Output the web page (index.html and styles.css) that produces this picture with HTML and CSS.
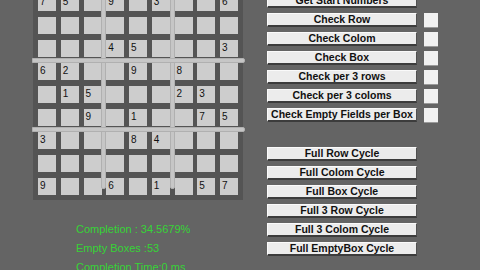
FILE: index.html
```html
<!DOCTYPE html>
<html lang="en">
<head>
    <meta charset="UTF-8">
    <title>Sudoku Solver</title>
    <link rel="stylesheet" href="styles.css">
</head>
<body>
    <div class="left-side">
        <div class="board">
            <div class="cell">7</div><div class="cell">5</div><div class="cell"></div><div class="cell">9</div><div class="cell"></div><div class="cell">3</div><div class="cell"></div><div class="cell"></div><div class="cell">6</div>
            <div class="cell"></div><div class="cell"></div><div class="cell"></div><div class="cell"></div><div class="cell"></div><div class="cell"></div><div class="cell"></div><div class="cell"></div><div class="cell"></div>
            <div class="cell"></div><div class="cell"></div><div class="cell"></div><div class="cell">4</div><div class="cell">5</div><div class="cell"></div><div class="cell"></div><div class="cell"></div><div class="cell">3</div>
            <div class="cell">6</div><div class="cell">2</div><div class="cell"></div><div class="cell"></div><div class="cell">9</div><div class="cell"></div><div class="cell">8</div><div class="cell"></div><div class="cell"></div>
            <div class="cell"></div><div class="cell">1</div><div class="cell">5</div><div class="cell"></div><div class="cell"></div><div class="cell"></div><div class="cell">2</div><div class="cell">3</div><div class="cell"></div>
            <div class="cell"></div><div class="cell"></div><div class="cell">9</div><div class="cell"></div><div class="cell">1</div><div class="cell"></div><div class="cell"></div><div class="cell">7</div><div class="cell">5</div>
            <div class="cell">3</div><div class="cell"></div><div class="cell"></div><div class="cell"></div><div class="cell">8</div><div class="cell">4</div><div class="cell"></div><div class="cell"></div><div class="cell"></div>
            <div class="cell"></div><div class="cell"></div><div class="cell"></div><div class="cell"></div><div class="cell"></div><div class="cell"></div><div class="cell"></div><div class="cell"></div><div class="cell"></div>
            <div class="cell">9</div><div class="cell"></div><div class="cell"></div><div class="cell">6</div><div class="cell"></div><div class="cell">1</div><div class="cell"></div><div class="cell">5</div><div class="cell">7</div>

            <div class="bar bar-v bar-v1"></div>
            <div class="bar bar-v bar-v2"></div>
            <div class="bar bar-h bar-h1"></div>
            <div class="bar bar-h bar-h2"></div>
        </div>

        <div class="stats">
            <p>Completion : 34.5679%</p>
            <p>Empty Boxes :53</p>
            <p>Completion Time:0 ms</p>
        </div>
    </div>

    <div class="right-side">
        <div class="btn-group">
            <div class="btn-row"><button class="btn">Get Start Numbers</button></div>
            <div class="btn-row"><button class="btn">Check Row</button><span class="check-box"></span></div>
            <div class="btn-row"><button class="btn">Check Colom</button><span class="check-box"></span></div>
            <div class="btn-row"><button class="btn">Check Box</button><span class="check-box"></span></div>
            <div class="btn-row"><button class="btn">Check per 3 rows</button><span class="check-box"></span></div>
            <div class="btn-row"><button class="btn">Check per 3 coloms</button><span class="check-box"></span></div>
            <div class="btn-row"><button class="btn">Check Empty Fields per Box</button><span class="check-box"></span></div>
        </div>

        <div class="btn-group cycles">
            <div class="btn-row"><button class="btn">Full Row Cycle</button></div>
            <div class="btn-row"><button class="btn">Full Colom Cycle</button></div>
            <div class="btn-row"><button class="btn">Full Box Cycle</button></div>
            <div class="btn-row"><button class="btn">Full 3 Row Cycle</button></div>
            <div class="btn-row"><button class="btn">Full 3 Colom Cycle</button></div>
            <div class="btn-row"><button class="btn">Full EmptyBox Cycle</button></div>
        </div>
    </div>
</body>
</html>
```

FILE: styles.css
```css
body {
    font-family: "Liberation Sans", Arial, sans-serif;
    background-color: #646464;
    margin: 0;
    padding: 0;
    width: 480px;
    height: 270px;
    overflow: hidden;
    display: flex;
}

.left-side {
    width: 234px;
    padding-left: 33px;
}

.board {
    position: relative;
    margin-top: -11px;
    width: fit-content;
    padding: 5px;
    background-color: #545454;
    display: grid;
    grid-template-columns: repeat(9, 18px);
    grid-auto-rows: 17px;
    column-gap: 4.75px;
    row-gap: 6px;
}

.cell {
    background-color: #cdcdcd;
    color: #111;
    font-size: 10px;
    line-height: 10px;
    padding: 3px 0 0 2px;
}

.bar {
    position: absolute;
    background-color: #c6c6c6;
    border: 1px solid #b0b0b0;
    box-sizing: border-box;
}

.bar-v {
    top: 0;
    width: 5px;
    height: 200px;
    border-radius: 0 0 2px 2px;
}

.bar-v1 { left: 68px; }
.bar-v2 { left: 137px; }

.bar-h {
    left: -1px;
    width: 213px;
    height: 5px;
    border-radius: 0 2px 2px 0;
}

.bar-h1 { top: 69px; }
.bar-h2 { top: 138px; }

.stats {
    margin-top: 23px;
    padding-left: 43px;
}

.stats p {
    margin: 0 0 6px 0;
    height: 13px;
    line-height: 13px;
    font-size: 11px;
    color: #36d436;
}

.right-side {
    padding-left: 0;
    margin-top: -6px;
}

.btn-group {
    display: flex;
    flex-direction: column;
    gap: 5px;
}

.cycles {
    margin-top: 25px;
}

.btn-row {
    display: flex;
    gap: 7px;
    height: 14px;
}

.btn {
    width: 150px;
    height: 14px;
    padding: 0;
    margin: 0;
    font-family: "Liberation Sans", Arial, sans-serif;
    font-size: 10.5px;
    font-weight: bold;
    line-height: 11px;
    color: #111;
    background-color: #ececec;
    border: none;
    border-top: 1px solid #fafafa;
    border-left: 1px solid #fafafa;
    border-bottom: 2px solid #3c3c3c;
    border-right: 1px solid #505050;
    box-sizing: border-box;
}

.check-box {
    width: 14px;
    height: 15px;
    background-color: #f1f1f1;
    border-bottom: 1px solid #9a9a9a;
    box-sizing: border-box;
}
```
